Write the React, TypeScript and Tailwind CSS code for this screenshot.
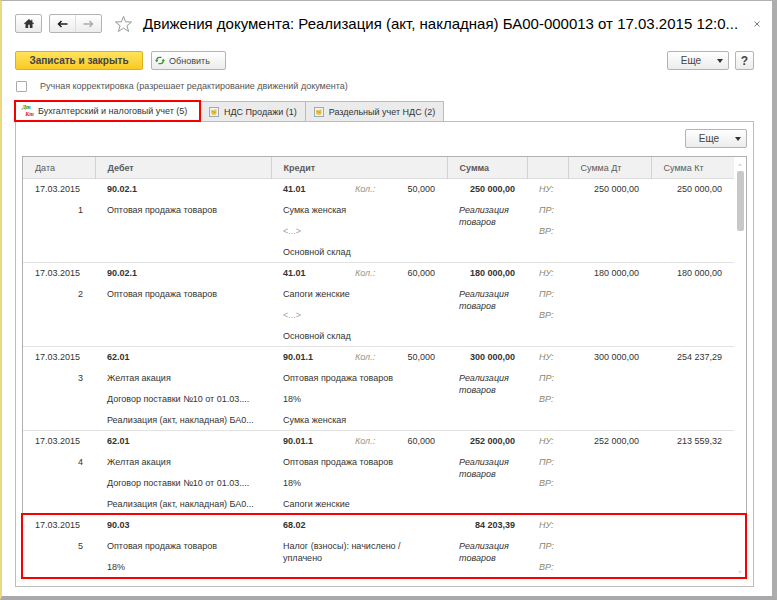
import type { ReactNode } from "react";

interface Entry {
  date: string;
  debit: string[];
  credit: string[];
  qty?: string;
  sum: string;
  sumDt?: string;
  sumKt?: string;
}

const ENTRIES: Entry[] = [
  {
    date: "17.03.2015",
    debit: ["90.02.1", "Оптовая продажа товаров"],
    credit: ["41.01", "Сумка женская", "<...>", "Основной склад"],
    qty: "50,000",
    sum: "250 000,00",
    sumDt: "250 000,00",
    sumKt: "250 000,00",
  },
  {
    date: "17.03.2015",
    debit: ["90.02.1", "Оптовая продажа товаров"],
    credit: ["41.01", "Сапоги женские", "<...>", "Основной склад"],
    qty: "60,000",
    sum: "180 000,00",
    sumDt: "180 000,00",
    sumKt: "180 000,00",
  },
  {
    date: "17.03.2015",
    debit: ["62.01", "Желтая акация", "Договор поставки №10 от 01.03....", "Реализация (акт, накладная) БА0..."],
    credit: ["90.01.1", "Оптовая продажа товаров", "18%", "Сумка женская"],
    qty: "50,000",
    sum: "300 000,00",
    sumDt: "300 000,00",
    sumKt: "254 237,29",
  },
  {
    date: "17.03.2015",
    debit: ["62.01", "Желтая акация", "Договор поставки №10 от 01.03....", "Реализация (акт, накладная) БА0..."],
    credit: ["90.01.1", "Оптовая продажа товаров", "18%", "Сапоги женские"],
    qty: "60,000",
    sum: "252 000,00",
    sumDt: "252 000,00",
    sumKt: "213 559,32",
  },
  {
    date: "17.03.2015",
    debit: ["90.03", "Оптовая продажа товаров", "18%"],
    credit: ["68.02", "Налог (взносы): начислено / уплачено"],
    sum: "84 203,39",
  },
];

const BTN =
  "flex shrink-0 items-center justify-center rounded-[2px] border border-[#b4b4b4] bg-gradient-to-b from-white to-[#ececec] text-[#444]";

function MoreButton() {
  return (
    <button className={`${BTN} h-[19px] w-[62px] gap-4 pl-2 text-[10px]`}>
      Еще
      <svg width="6" height="4" viewBox="0 0 6 4">
        <path d="M0 0h6L3 4z" fill="#333" />
      </svg>
    </button>
  );
}

function RegisterIcon() {
  return (
    <svg width="10" height="10" viewBox="0 0 10 10">
      <rect x="0.5" y="0.5" width="9" height="9" fill="#edf3f9" stroke="#9aabba" />
      <path d="M2 2.800 3.500 3.500 7.500 2v4.500L6.500 8H3.500L2 6.500z" fill="#efc548" />
      <path d="M3 4 4.500 5.200h2.200" fill="none" stroke="#b98a24" strokeWidth="0.800" />
    </svg>
  );
}

function Tab({ children }: { children: ReactNode }) {
  return (
    <button className="flex h-5 items-center gap-[5px] border border-b-0 border-l-0 border-[#bbb] bg-[#ebebeb] px-2">
      <RegisterIcon />
      {children}
    </button>
  );
}

function Row({ entry, index }: { entry: Entry; index: number }) {
  return (
    <tr className="align-top shadow-[inset_0_-1px_#e3e3e3] last:shadow-none">
      <td className="pl-3 pr-3">
        <div>{entry.date}</div>
        <div className="text-right">{index + 1}</div>
      </td>
      <td className="overflow-hidden whitespace-nowrap pl-3">
        {entry.debit.map((line, i) => (
          <div key={i} className="first:font-bold">{line}</div>
        ))}
      </td>
      <td className="pl-3 pr-3">
        <div className="flex">
          <b className="w-[72px]">{entry.credit[0]}</b>
          {entry.qty && (
            <>
              <i className="text-[#98937c]">Кол.:</i>
              <span className="ml-auto">{entry.qty}</span>
            </>
          )}
        </div>
        {entry.credit.slice(1).map((line, i) => (
          <div key={i} className={line === "<...>" ? "text-[#a0a0a0]" : line.length > 30 ? "py-1 leading-3" : ""}>
            {line}
          </div>
        ))}
      </td>
      <td className="pl-3 pr-3">
        <div className="text-right font-bold">{entry.sum}</div>
        <div className="py-1 italic leading-3">Реализация товаров</div>
      </td>
      <td className="pl-3 italic text-[#8d8870]">
        <div>НУ:</div>
        <div>ПР:</div>
        <div>ВР:</div>
      </td>
      <td className="pr-3 text-right">{entry.sumDt}</td>
      <td className="pr-3 text-right">{entry.sumKt}</td>
    </tr>
  );
}

export default function App() {
  return (
    <div className="flex min-h-screen flex-col border-b-4 border-l-2 border-r-[5px] border-t border-b-[#a9a9ab] border-l-[#ecd87f] border-r-[#adadad] border-t-[#b0b0b0] bg-white pb-[9px] pl-[13px] pr-[18px] font-['Liberation_Sans',Arial,sans-serif] text-[9px] leading-4 text-[#333]">
      <header className="mt-[13px] flex h-[19px] items-center">
        <button aria-label="Домой" className={`${BTN} h-[19px] w-[27px]`}>
          <svg width="10" height="9" viewBox="0 0 10 9" fill="#333">
            <path d="M5 0 0 4.500l.7.8L1.500 4.600V9h2.700V5.800h1.600V9h2.700V4.600l.8.700.7-.8-1.700-1.500V.7H7.200v1.200z" />
          </svg>
        </button>
        <div className={`${BTN} ml-[7px] h-[19px] w-[53px]`}>
          <button aria-label="Назад" className="flex h-full flex-1 items-center justify-center border-r border-[#ddd]">
            <svg width="11" height="8" viewBox="0 0 11 8" fill="none" stroke="#222" strokeWidth="1.600">
              <path d="M10.500 4H2M4.500 1 1.500 4l3 3" />
            </svg>
          </button>
          <button aria-label="Вперед" className="flex h-full flex-1 items-center justify-center">
            <svg width="11" height="8" viewBox="0 0 11 8" fill="none" stroke="#aaa" strokeWidth="1.400">
              <path d="M.5 4h9M6.500 1l3 3-3 3" />
            </svg>
          </button>
        </div>
        <button aria-label="В избранное" className="ml-3 shrink-0">
          <svg width="19" height="18" viewBox="0 0 19 18" fill="white" stroke="#999">
            <path d="m9.500 1.300 2.100 5.500 6 .2-4.700 3.700 1.700 5.800-5.100-3.400-5.100 3.400 1.700-5.800L1.400 7l6-.2z" />
          </svg>
        </button>
        <h1 className="ml-[10px] whitespace-nowrap text-[15px] leading-5 text-black">
          Движения документа: Реализация (акт, накладная) БА00-000013 от 17.03.2015 12:0...
        </h1>
        <button aria-label="Закрыть" className="-mr-[6px] ml-auto shrink-0">
          <svg width="6" height="6" viewBox="0 0 6 6" stroke="#777">
            <path d="m.5.5 5 5m0-5-5 5" />
          </svg>
        </button>
      </header>

      <div className="mt-[18px] flex gap-2">
        <button className="h-[19px] w-32 rounded-[2px] border border-[#d9b21c] bg-gradient-to-b from-[#ffe35a] to-[#f9ca1e] text-[10px] font-bold text-[#444]">
          Записать и закрыть
        </button>
        <button className={`${BTN} h-[19px] w-[75px] gap-1 pr-3`}>
          <svg width="10" height="9" viewBox="0 0 10 9" fill="none" stroke="#3b9434" strokeWidth="1.300">
            <path d="M1.700 5V4a3 3 0 0 1 3-2.700h1.800M8.300 4v1a3 3 0 0 1-3 2.700H3.500" />
            <path d="M0 4h3.400L1.700 6.300zM10 5H6.600l1.700-2.300z" fill="#3b9434" stroke="none" />
          </svg>
          Обновить
        </button>
        <div className="ml-auto flex gap-[6px]">
          <MoreButton />
          <button aria-label="Справка" className={`${BTN} h-[19px] w-[19px] text-[12px] font-bold`}>?</button>
        </div>
      </div>

      <label className="mt-2 flex h-4 items-center gap-[13px] pl-px text-[#555]">
        <input type="checkbox" className="size-[11px] appearance-none rounded-[1px] border border-[#aaa] bg-white" />
        Ручная корректировка (разрешает редактирование движений документа)
      </label>

      <nav className="mt-[6px] flex items-end">
        <button className="z-10 -mb-px -ml-px flex h-[22px] w-[187px] items-center gap-1 border-2 border-[#f80000] bg-white px-[6px]">
          <span
            aria-hidden="true"
            className="flex w-3 flex-col items-start font-['Liberation_Serif',serif] text-[6px] font-bold italic leading-[7px]"
          >
            <span className="text-[#238a23]">Дт</span>
            <span className="self-end text-[#e02020]">Кт</span>
          </span>
          Бухгалтерский и налоговый учет (5)
        </button>
        <Tab>НДС Продажи (1)</Tab>
        <Tab>Раздельный учет НДС (2)</Tab>
      </nav>

      <main className="flex-1 border border-[#bdbdbd] px-[6px] pb-[7px] pt-[7px]">
        <div className="flex justify-end">
          <MoreButton />
        </div>
        <div className="relative mt-2 flex border border-[#b0b0b0]">
          <div className="min-w-0 flex-1">
            <table className="w-full table-fixed leading-[21px]">
              <colgroup>
                <col className="w-[72px]" />
                <col />
                <col />
                <col className="w-20" />
                <col className="w-[41px]" />
                <col className="w-[83px]" />
                <col className="w-[83px]" />
              </colgroup>
              <thead>
                <tr className="h-[22px] bg-[#f1f1f1] text-left text-[#5c5c5c] shadow-[inset_0_-1px_#ddd]">
                  <th className="border-r border-[#d2d2d2] pl-3 font-normal">Дата</th>
                  <th className="border-r border-[#d2d2d2] pl-3">Дебет</th>
                  <th className="border-r border-[#d2d2d2] pl-3">Кредит</th>
                  <th className="border-r border-[#d2d2d2] pl-3">Сумма</th>
                  <td className="border-r border-[#d2d2d2]" />
                  <th className="border-r border-[#d2d2d2] pl-3 font-normal">Сумма Дт</th>
                  <th className="pl-3 font-normal">Сумма Кт</th>
                </tr>
              </thead>
              <tbody>
                {ENTRIES.map((entry, i) => (
                  <Row key={i} entry={entry} index={i} />
                ))}
              </tbody>
            </table>
          </div>
          <div className="flex w-3 flex-col items-center pb-1 pt-[6px]">
            <svg width="4" height="3" viewBox="0 0 4 3">
              <path d="M2 0 4 3H0z" fill="#ddd" />
            </svg>
            <div className="mt-[5px] h-[60px] w-[7px] rounded-[2px] bg-[#c8c8c8]" />
            <svg className="mt-auto" width="4" height="3" viewBox="0 0 4 3">
              <path d="M0 0h4L2 3z" fill="#ddd" />
            </svg>
          </div>
          <div className="pointer-events-none absolute -bottom-px -left-[2px] -right-px h-[66px] border-2 border-[#f80000]" />
        </div>
      </main>
    </div>
  );
}
